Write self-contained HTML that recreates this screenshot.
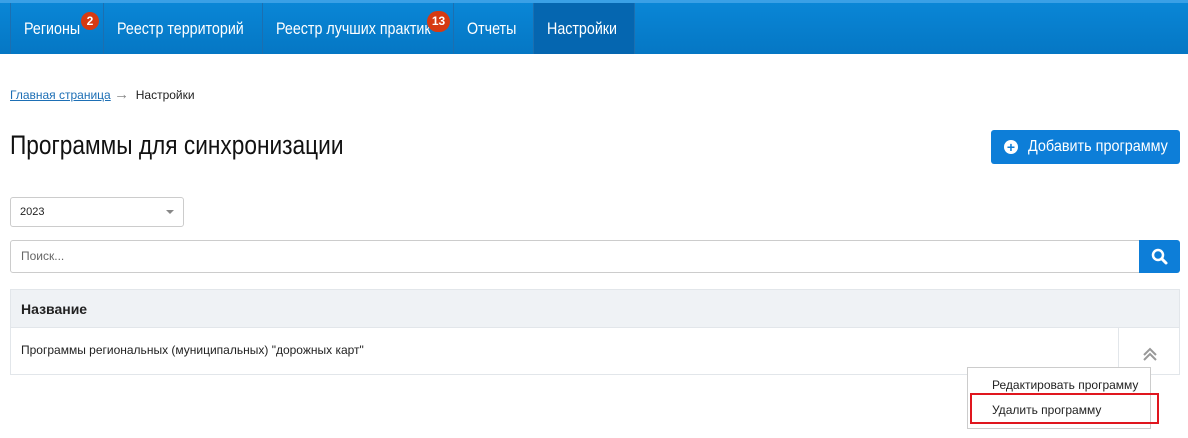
<!DOCTYPE html>
<html><head><meta charset="utf-8"><style>
*{box-sizing:border-box;margin:0;padding:0}
body{width:1188px;height:438px;background:#fff;font-family:"Liberation Sans",sans-serif;position:relative;overflow:hidden;color:#222}
.nav{position:absolute;left:0;top:0;width:1188px;height:54px;background:linear-gradient(#0a86d6,#0577c4);border-top:3px solid #3aa0e6}
.ni{position:absolute;top:0;height:51px;line-height:52px;color:#fff;font-size:17px;border-left:1px solid #1c6fb0;padding-left:13px;white-space:nowrap}
.ni span,.n{display:inline-block;transform:scaleX(0.84);transform-origin:left center;white-space:nowrap}
.ni.act{background:#0566b0}
.badge{position:absolute;width:18px;height:18px;border-radius:9px;background:#d63a12;color:#fff;font-size:12px;line-height:18px;text-align:center;font-weight:bold}
.bc{position:absolute;left:10px;top:86px;font-size:12px;color:#222}
.bc a{color:#1d6fb5;text-decoration:underline}
h1{position:absolute;left:10px;top:130px;font-size:27px;font-weight:normal;color:#111;white-space:nowrap}
.btn{position:absolute;left:991px;top:130px;width:189px;height:34px;background:#0d7ed8;border-radius:3px;color:#fff;font-size:16px;line-height:34px;padding-left:37px;white-space:nowrap}
.btn .n{transform:scaleX(0.9)}
.btn .pl{position:absolute;left:13px;top:10px;width:14px;height:14px;border-radius:7px;background:#fff;color:#0d7ed8;font-size:14px;line-height:14px;text-align:center;font-weight:bold}
.sel{position:absolute;left:10px;top:197px;width:174px;height:30px;border:1px solid #ccc;border-radius:3px;font-size:11px;line-height:28px;padding-left:9px}
.sel:after{content:"";position:absolute;right:9px;top:12px;border:4px solid transparent;border-top:4px solid #888}
.srch{position:absolute;left:10px;top:240px;width:1130px;height:33px;border:1px solid #ccc;border-radius:3px 0 0 3px;font-size:12px;color:#666;line-height:31px;padding-left:10px}
.sb{position:absolute;left:1139px;top:240px;width:41px;height:33px;background:#0d7ed8;border-radius:0 3px 3px 0}
.tbl{position:absolute;left:10px;top:289px;width:1170px;height:86px;border:1px solid #e2e6ea}
.th{height:38px;background:#eff2f5;border-bottom:1px solid #e2e6ea;font-weight:bold;font-size:14px;line-height:38px;padding-left:10px}
.tr{font-size:12px;line-height:45px;padding-left:10px;position:relative;height:46px}
.tr .ic{position:absolute;left:1107px;top:0;width:62px;height:46px;border-left:1px solid #e2e6ea}
.dd{position:absolute;left:967px;top:367px;width:184px;height:62px;background:#fff;border:1px solid #ccc;font-size:12px}
.dd div{position:absolute;left:24px;color:#222}
.red{position:absolute;left:970px;top:393px;width:189px;height:31px;border:2px solid #e0161e}
</style></head><body>
<div class="nav">
<div class="ni" style="left:10px;width:93px"><span>Регионы</span></div>
<div class="ni" style="left:103px;width:159px"><span>Реестр территорий</span></div>
<div class="ni" style="left:262px;width:191px"><span>Реестр лучших практик</span></div>
<div class="ni" style="left:453px;width:80px"><span>Отчеты</span></div>
<div class="ni act" style="left:533px;width:101px"><span>Настройки</span></div>
<div class="ni" style="left:634px;width:0"></div>
<div class="badge" style="left:81px;top:9px">2</div>
<div class="badge" style="left:427px;top:8px;width:23px;border-radius:11px;height:21px;line-height:21px">13</div>
</div>
<div class="bc"><a>Главная страница</a> <span style="color:#888;font-size:15px">&rarr;</span>&nbsp; Настройки</div>
<h1><span class="n">Программы для синхронизации</span></h1>
<div class="btn"><span class="pl">+</span><span class="n">Добавить программу</span></div>
<div class="sel">2023</div>
<div class="srch">Поиск...</div>
<div class="sb"><svg width="41" height="33"><circle cx="19" cy="15" r="5" fill="none" stroke="#fff" stroke-width="2.5"/><line x1="23" y1="19" x2="27" y2="23" stroke="#fff" stroke-width="3" stroke-linecap="round"/></svg></div>
<div class="tbl"><div class="th">Название</div><div class="tr">Программы региональных (муниципальных) "дорожных карт"<div class="ic"><svg width="62" height="46"><path d="M25 27l6-6 6 6M25 32l6-6 6 6" fill="none" stroke="#999" stroke-width="2"/></svg></div></div></div>
<div class="dd"><div style="top:10px">Редактировать программу</div><div style="top:35px">Удалить программу</div></div>
<div class="red"></div>
</body></html>
